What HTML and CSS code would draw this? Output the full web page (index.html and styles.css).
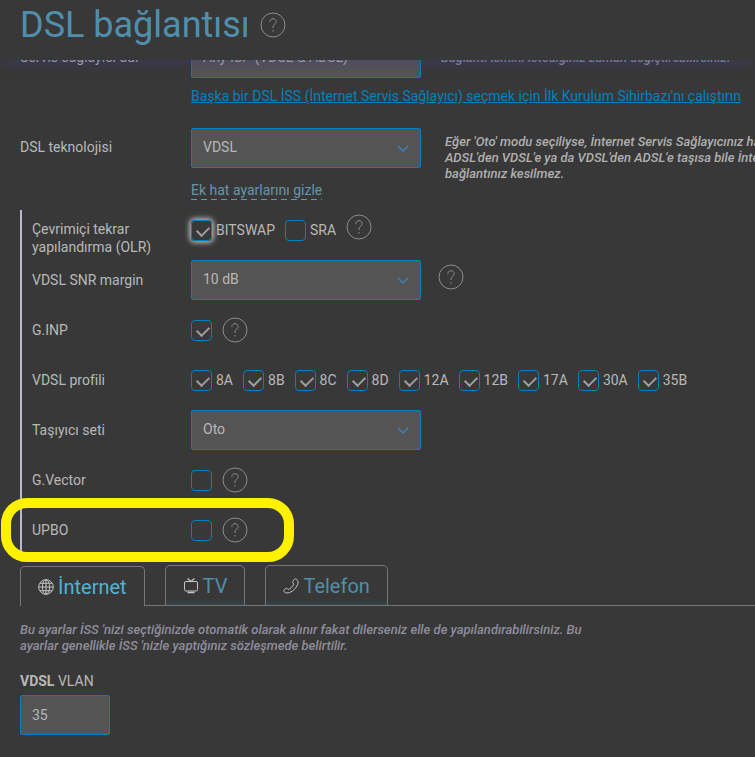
FILE: index.html
```html
<!DOCTYPE html>
<html lang="tr">
<head>
    <meta charset="UTF-8">
    <meta name="viewport" content="width=device-width, initial-scale=1.0">
    <title>DSL bağlantısı</title>
    <link rel="stylesheet" href="styles.css">
</head>
<body>

    <header class="header">
        <h1>DSL bağlantısı</h1>
        <button type="button" class="help" aria-label="Yardım"><svg><use href="#question"/></svg></button>
    </header>

    <!-- shared icons -->
    <svg class="defs">
        <symbol id="question" viewBox="0 0 26 26">
            <circle cx="13" cy="13" r="12"/>
            <path d="M9.9 10.2v-.6C9.9 7.9 11.2 6.700 13 6.700s3.100 1.200 3.100 2.800c0 1.400-.8 2.100-1.700 2.900-.9.800-1.400 1.400-1.400 2.600v1M13 18v1.500"/>
        </symbol>
        <symbol id="chevron" viewBox="0 0 12 8">
            <path d="M1 1l5 5 5-5"/>
        </symbol>
    </svg>

    <form class="main" autocomplete="off">
        <div class="row">
            <label class="label" for="provider">Servis sağlayıcı adı</label>
            <div class="select">
                <select id="provider"><option>Any ISP (VDSL &amp; ADSL)</option></select>
            </div>
            <p class="hint near">Bağlantı ismini istediğiniz zaman değiştirebilirsiniz.</p>
        </div>
        <div class="link-row">
            <a href="#" class="wizard">Başka bir DSL İSS (İnternet Servis Sağlayıcı) seçmek için İlk Kurulum Sihirbazı'nı çalıştırın</a>
        </div>
        <div class="row">
            <label class="label" for="technology">DSL teknolojisi</label>
            <div class="select">
                <select id="technology"><option>VDSL</option></select>
                <svg><use href="#chevron"/></svg>
            </div>
            <p class="hint tall">Eğer 'Oto' modu seçiliyse, İnternet Servis Sağlayıcınız hattınızı<br>ADSL'den VDSL'e ya da VDSL'den ADSL'e taşısa bile İnternet<br>bağlantınız kesilmez.</p>
        </div>
        <div class="link-row">
            <a href="#" class="toggle">Ek hat ayarlarını gizle</a>
        </div>

        <div class="advanced">
            <div class="row first">
                <span class="label">Çevrimiçi tekrar yapılandırma (OLR)</span>
                <div class="checks">
                    <label class="check"><input type="checkbox" class="focused" checked>BITSWAP</label>
                    <label class="check"><input type="checkbox">SRA</label>
                </div>
                <button type="button" class="help raised" aria-label="Yardım"><svg><use href="#question"/></svg></button>
            </div>
            <div class="row">
                <label class="label" for="snr">VDSL SNR margin</label>
                <div class="select">
                    <select id="snr"><option>10 dB</option></select>
                    <svg><use href="#chevron"/></svg>
                </div>
                <button type="button" class="help raised wide" aria-label="Yardım"><svg><use href="#question"/></svg></button>
            </div>
            <div class="row">
                <label class="label" for="ginp">G.INP</label>
                <input type="checkbox" id="ginp" checked>
                <button type="button" class="help" aria-label="Yardım"><svg><use href="#question"/></svg></button>
            </div>
            <div class="row">
                <span class="label">VDSL profili</span>
                <div class="checks">
                    <label class="check"><input type="checkbox" checked>8A</label>
                    <label class="check"><input type="checkbox" checked>8B</label>
                    <label class="check"><input type="checkbox" checked>8C</label>
                    <label class="check"><input type="checkbox" checked>8D</label>
                    <label class="check"><input type="checkbox" checked>12A</label>
                    <label class="check"><input type="checkbox" checked>12B</label>
                    <label class="check"><input type="checkbox" checked>17A</label>
                    <label class="check"><input type="checkbox" checked>30A</label>
                    <label class="check"><input type="checkbox" checked>35B</label>
                </div>
            </div>
            <div class="row">
                <label class="label" for="carrier">Taşıyıcı seti</label>
                <div class="select">
                    <select id="carrier"><option>Oto</option></select>
                    <svg><use href="#chevron"/></svg>
                </div>
            </div>
            <div class="row">
                <label class="label" for="gvector">G.Vector</label>
                <input type="checkbox" id="gvector">
                <button type="button" class="help" aria-label="Yardım"><svg><use href="#question"/></svg></button>
            </div>
            <div class="row">
                <label class="label" for="upbo">UPBO</label>
                <input type="checkbox" id="upbo">
                <button type="button" class="help" aria-label="Yardım"><svg><use href="#question"/></svg></button>
                <div class="highlight"></div>
            </div>
        </div>

        <nav class="tabs">
            <button type="button" class="tab active">
                <svg viewBox="0 0 16 16"><circle cx="8" cy="8" r="7.3"/><ellipse cx="8" cy="8" rx="3.6" ry="7.3"/><path d="M8 .7v14.600M.7 8h14.600M2 4.300h12M2 11.700h12"/></svg>
                İnternet
            </button>
            <button type="button" class="tab">
                <svg viewBox="0 0 16 16"><rect x="1.5" y="3.5" width="13" height="9.500" rx="1.500"/><path d="M4.500.5L8 3.500 11.500.5M4.500 14.500h7" stroke-width="1.300"/></svg>
                TV
            </button>
            <button type="button" class="tab">
                <svg viewBox="0 0 16 16"><path d="M10.200 2.600l1.500-1.400c.6-.5 1.200-.5 1.800 0 1.600 1.300 2 3.300 1.100 5.400-1.300 3.200-4.500 6.500-7.900 7.900-2.200.9-4.300.7-5.600-.9-.5-.6-.4-1.200.1-1.700l1.500-1.300c.6-.5 1.300-.5 1.800.1l.8.9c2.200-1 4.500-3.300 5.600-5.500l-.8-.9c-.6-.8-.5-1.900.1-2.600z"/></svg>
                Telefon
            </button>
        </nav>

        <p class="note">Bu ayarlar İSS 'nizi seçtiğinizde otomatik olarak alınır fakat dilerseniz elle de yapılandırabilirsiniz. Bu ayarlar genellikle İSS 'nizle yaptığınız sözleşmede belirtilir.</p>

        <div class="vlan">
            <label for="vlan"><b>VDSL</b> VLAN</label>
            <input type="text" id="vlan" name="vlan" value="35">
        </div>
    </form>

</body>
</html>
```

FILE: styles.css
```css
* {
    margin: 0;
    padding: 0;
    box-sizing: border-box;
}
body {
    background-color: #383838;
    color: #b8b8b8;
    font-family: Roboto, "Liberation Sans", sans-serif;
    font-size: 14px;
    line-height: 18px;
    overflow-x: hidden;
}
svg {
    fill: none;
    stroke: currentColor;
}
.defs {
    position: absolute;
    width: 0;
    height: 0;
}
.header {
    position: relative;
    z-index: 1;
    display: flex;
    align-items: center;
    height: 60px;
    padding: 0 20px 10px;
    background-color: #383838;
    box-shadow: 0 0 14px rgba(60, 60, 130, 0.6);
}
h1 {
    color: #508fac;
    font-size: 36px;
    font-weight: 400;
    line-height: 50px;
}
.main {
    margin-top: -22px;
    padding-left: 20px;
}
.row {
    position: relative;
    display: flex;
    align-items: center;
    height: 40px;
}
.label {
    flex: none;
    width: 171px;
    padding-bottom: 3px;
}
.select {
    position: relative;
    flex: none;
    width: 230px;
}
.select svg {
    position: absolute;
    right: 12px;
    top: 17px;
    width: 12px;
    height: 8px;
    color: #3f80b8;
    stroke-width: 1.5;
    pointer-events: none;
}
select, input[type="text"] {
    width: 100%;
    height: 40px;
    padding: 0 11px;
    border: 1px solid #0082be;
    border-radius: 2px;
    outline: none;
    appearance: none;
    background-color: #545454;
    color: #b8b8b8;
    font: inherit;
}
select {
    padding-bottom: 3px;
}
.hint, .note {
    font-size: 13px;
    font-style: italic;
    font-weight: 500;
    line-height: 16px;
}
.hint {
    margin-left: 24px;
    color: #b0b0b0;
    white-space: nowrap;
}
.hint.near {
    margin-left: 20px;
    color: #8e8e9c;
}
.hint.tall {
    align-self: flex-start;
    margin-top: 6px;
}
.link-row {
    height: 50px;
    padding: 9px 0 0 171px;
    white-space: nowrap;
}
.wizard {
    color: #0082be;
}
.toggle {
    display: inline-block;
    margin-top: 3px;
    line-height: 20px;
    color: #6596ac;
    text-decoration: none;
    background: repeating-linear-gradient(90deg, #6596ac 0 6px, transparent 6px 10px) bottom / 100% 1px no-repeat;
}
.advanced {
    margin-top: -8px;
    padding-left: 10px;
    border-left: 2px solid #b9b9cb;
}
.advanced .row {
    height: 50px;
}
.advanced .row.first {
    height: 45px;
}
.advanced .label {
    width: 159px;
    padding: 0 30px 0 0;
}
.advanced .row.first .label {
    padding-top: 10px;
}
.checks {
    display: flex;
    gap: 10px;
}
.row.first .checks {
    margin-bottom: 5px;
}
.check {
    display: flex;
    align-items: center;
    gap: 4px;
}
input[type="checkbox"] {
    flex: none;
    width: 21px;
    height: 21px;
    appearance: none;
    border: 1px solid #0082be;
    border-radius: 4px;
}
input[type="checkbox"]:checked::before {
    content: "";
    display: block;
    width: 10px;
    height: 6px;
    margin: 5px 0 0 5px;
    border: solid #a0a0a0;
    border-width: 0 0 2px 2px;
    transform: rotate(-45deg);
}
input.focused {
    box-shadow: 0 0 5px 2px #b4b4b4;
}
.help {
    flex: none;
    width: 26px;
    height: 26px;
    margin-left: 10px;
    border: none;
    background: none;
    color: #8c8c8c;
    cursor: pointer;
}
.help svg {
    display: block;
    width: 26px;
    height: 26px;
}
.help.raised {
    margin-bottom: 6px;
}
.row.first .help {
    margin-bottom: 11px;
}
.help.wide {
    margin-left: 17px;
}
/* marker ring round the last option */
.highlight {
    position: absolute;
    left: -31px;
    top: -7px;
    width: 293px;
    height: 64px;
    border: 10px solid #fff200;
    border-radius: 26px;
    pointer-events: none;
}
.tabs {
    display: flex;
    align-items: flex-end;
    gap: 20px;
    height: 41px;
    margin-top: 10px;
    box-shadow: inset 0 -1px #777;
}
.tab {
    display: flex;
    align-items: center;
    gap: 4px;
    height: 41px;
    padding: 0 17px;
    border: 1px solid #777;
    border-radius: 5px 5px 0 0;
    background: #383838 linear-gradient(transparent 85%, #35434a);
    color: #508fac;
    font: inherit;
    font-size: 20px;
    cursor: pointer;
}
.tab.active {
    height: 40px;
    border-bottom: none;
    background: #383838;
    color: #50b4d2;
}
.tab svg {
    width: 16px;
    height: 16px;
    color: #c4c4c4;
}
.note {
    max-width: 580px;
    margin-top: 16px;
    color: #8e8e9c;
}
.vlan {
    width: 90px;
    margin-top: 18px;
}
.vlan label {
    display: block;
    margin-bottom: 5px;
}
```
